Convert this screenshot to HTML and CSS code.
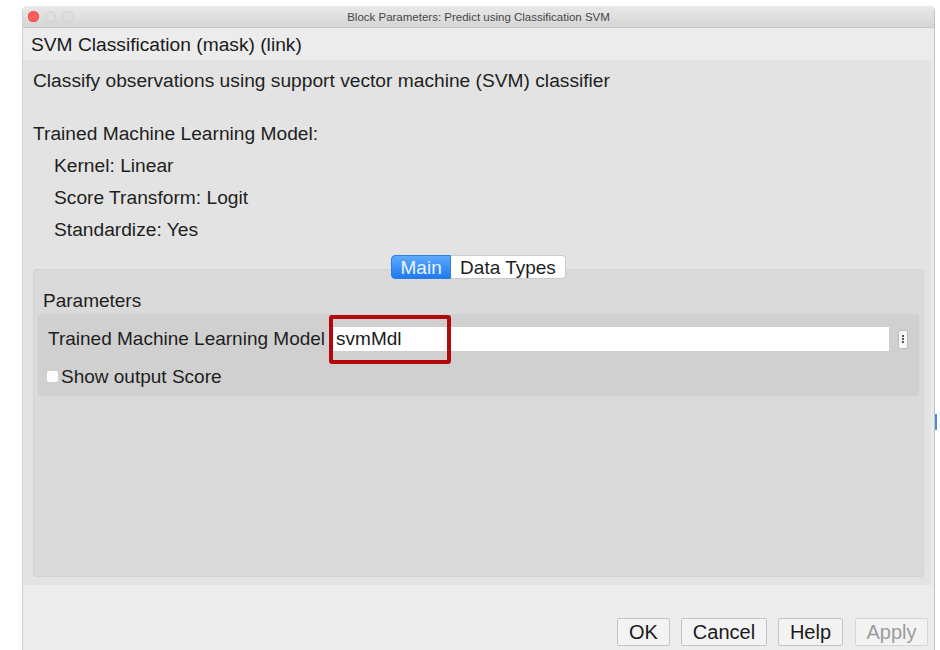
FILE: index.html
```html
<!DOCTYPE html>
<html lang="en">
<head>
<meta charset="utf-8">
<title>Block Parameters: Predict using Classification SVM</title>
<link rel="stylesheet" href="styles.css">
</head>
<body>
<div class="window">
  <div class="titlebar">
    <div class="lights">
      <span class="light close"></span>
      <span class="light"></span>
      <span class="light"></span>
    </div>
    <div class="title">Block Parameters: Predict using Classification SVM</div>
  </div>
  <div class="header">SVM Classification (mask) (link)</div>
  <div class="content">
    <div class="desc">Classify observations using support vector machine (SVM) classifier</div>
    <div class="model">
      <div class="model-title">Trained Machine Learning Model:</div>
      <div class="model-item">Kernel: Linear</div>
      <div class="model-item">Score Transform: Logit</div>
      <div class="model-item">Standardize: Yes</div>
    </div>
    <div class="tabs">
      <span class="tab active">Main</span>
      <span class="tab">Data Types</span>
    </div>
    <div class="panel">
      <div class="group-title">Parameters</div>
      <div class="group">
        <div class="row">
          <label class="label" for="mdl">Trained Machine Learning Model</label>
          <input class="field" id="mdl" type="text" value="svmMdl">
          <span class="more"><i></i><i></i><i></i></span>
        </div>
        <div class="row check-row">
          <span class="checkbox"></span>
          <span>Show output Score</span>
        </div>
        <div class="highlight"></div>
      </div>
    </div>
  </div>
  <div class="footer">
    <button class="btn ok">OK</button>
    <button class="btn cancel">Cancel</button>
    <button class="btn help">Help</button>
    <button class="btn apply" disabled>Apply</button>
  </div>
</div>
<div class="edge-mark"></div>
</body>
</html>
```
FILE: styles.css
```css
html, body {
  margin: 0;
  padding: 0;
  background: #ffffff;
  height: 650px;
  overflow: hidden;
}

body {
  font-family: "Liberation Sans", Arial, sans-serif;
  color: #1e1e1e;
  position: relative;
}

.window {
  margin: 6px 0 0 22px;
  width: 913px;
  height: 660px;
  display: flex;
  flex-direction: column;
  border-left: 1px solid #d2d2d2;
  border-right: 1px solid #c4c4c4;
  border-radius: 5px 5px 0 0;
  overflow: hidden;
  box-sizing: border-box;
}

/* title bar */
.titlebar {
  height: 22px;
  flex: none;
  display: flex;
  align-items: center;
  background: linear-gradient(#e9e9e9, #d5d5d5);
  border-bottom: 1px solid #c6c6c6;
  box-sizing: border-box;
}

.lights {
  display: flex;
  gap: 6px;
  padding-left: 5px;
}

.light {
  width: 11px;
  height: 11px;
  border-radius: 50%;
  background: #dedede;
  box-shadow: inset 0 0 0 0.5px #cacaca;
}

.light.close {
  background: #fc5e57;
  box-shadow: inset 0 0 0 0.5px #e0443e;
}

.title {
  flex: 1;
  text-align: center;
  font-size: 11.5px;
  color: #474747;
  padding-right: 50px;
}

/* mask header */
.header {
  height: 32px;
  flex: none;
  background: #ececec;
  font-size: 19.2px;
  line-height: 33px;
  padding-left: 8px;
  color: #1a1a1a;
}

/* mask body */
.content {
  height: 525px;
  flex: none;
  display: flex;
  flex-direction: column;
  background: #e3e3e3;
  padding: 5px 7px 8px 10px;
  border-right: 3px solid #eaeaea;
  box-sizing: border-box;
}

.desc {
  font-size: 19.2px;
  line-height: 32px;
}

.model {
  margin-top: 21px;
  font-size: 19.2px;
  line-height: 32px;
}

.model-item {
  padding-left: 21px;
}

.tabs {
  display: flex;
  justify-content: center;
  margin-top: 9px;
  position: relative;
  z-index: 1;
}

.tab {
  height: 24px;
  line-height: 24px;
  font-size: 19px;
  padding: 0 9px;
  background: #ffffff;
  border: 1px solid #cbcbcb;
  border-left: none;
  border-radius: 0 4px 4px 0;
  box-sizing: border-box;
  color: #1e1e1e;
}

.tab.active {
  background: linear-gradient(#5ea9fc, #1f79f2);
  border: 1px solid #2a7ee6;
  border-radius: 4px 0 0 4px;
  color: #eaf3ff;
  width: 60px;
  text-align: center;
  padding: 0;
}

.panel {
  margin-top: -10px;
  flex: 1;
  background: #dadada;
  border: 1px solid #d3d3d3;
  border-radius: 3px;
  padding: 21px 4px 0 4px;
}

.group-title {
  font-size: 19px;
  line-height: 20px;
  padding-left: 5px;
}

.group {
  position: relative;
  margin-top: 3px;
  background: #d0d0d0;
  border-radius: 3px;
  height: 82px;
  box-sizing: border-box;
  padding: 12px 10px 0 10px;
}

.row {
  display: flex;
  align-items: center;
  font-size: 19px;
  line-height: 26px;
}

.label {
  white-space: nowrap;
  margin-right: 6px;
}

.field {
  flex: 1;
  height: 26px;
  box-sizing: border-box;
  border: 1px solid #cfcfcf;
  background: #ffffff;
  font-family: "Liberation Sans", Arial, sans-serif;
  font-size: 19px;
  padding: 0 0 0 4px;
  margin: 0;
  color: #1a1a1a;
  outline: none;
}

.more {
  width: 10px;
  height: 19px;
  margin-left: 8px;
  margin-right: 1px;
  box-sizing: border-box;
  border: 1px solid #bdbdbd;
  border-radius: 2px;
  background: #f7f7f7;
  display: flex;
  flex-direction: column;
  align-items: center;
  justify-content: center;
  gap: 1px;
}

.more i {
  width: 2px;
  height: 2px;
  background: #555555;
}

.check-row {
  margin-top: 12px;
  margin-left: -1px;
}

.checkbox {
  width: 11px;
  height: 11px;
  background: #ffffff;
  border-radius: 2px;
  margin-right: 3px;
  margin-top: -2px;
}

/* emphasis frame drawn over the model field */
.highlight {
  position: absolute;
  left: 291px;
  top: 1px;
  width: 122px;
  height: 49px;
  box-sizing: border-box;
  border: 4px solid #b20a0a;
  border-radius: 3px;
}

/* dialog buttons */
.footer {
  flex: 1;
  background: #ececec;
  display: flex;
  justify-content: flex-end;
  align-items: flex-start;
  gap: 11px;
  padding: 33px 6px 0 0;
}

.btn {
  height: 28px;
  font-family: "Liberation Sans", Arial, sans-serif;
  font-size: 20px;
  color: #1a1a1a;
  background: #f3f3f3;
  border: 1px solid #c4c4c4;
  border-radius: 2px;
  padding: 0;
  margin: 0;
}

.btn.ok { width: 53px; }
.btn.cancel { width: 86px; }
.btn.help { width: 65px; }
.btn.apply { width: 73px; color: #9c9c9c; border-color: #d6d6d6; margin-left: 1px; }

.edge-mark {
  position: absolute;
  left: 935px;
  top: 414px;
  width: 2px;
  height: 16px;
  background: #4a8fd6;
}
```
